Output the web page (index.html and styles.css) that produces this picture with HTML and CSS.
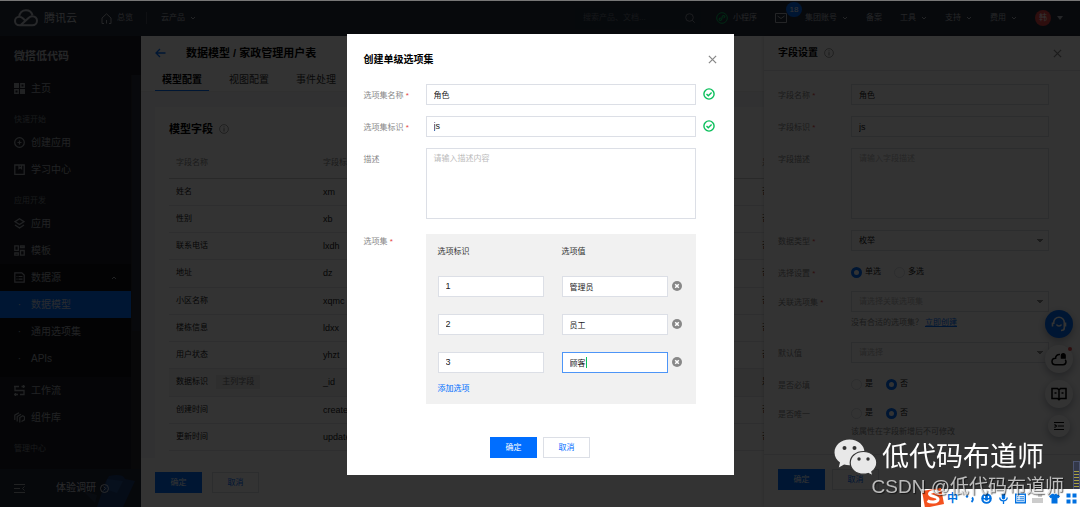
FILE: index.html
```html
<!DOCTYPE html>
<html lang="zh-CN">
<head>
<meta charset="utf-8">
<title>微搭低代码</title>
<meta name="viewport" content="width=device-width, initial-scale=1">
<link rel="stylesheet" href="styles.css">
</head>
<body>
<svg class="defs" aria-hidden="true">
  <symbol id="i-chevron" viewBox="0 0 6 4"><path d="M1 1l2 2 2-2" fill="none" stroke="currentColor"/></symbol>
  <symbol id="i-info" viewBox="0 0 10 10"><circle cx="5" cy="5" r="4.4" fill="none" stroke="currentColor" stroke-width=".8"/><path d="M5 4.2v3.3M5 2.4v1" stroke="currentColor"/></symbol>
  <symbol id="i-close" viewBox="0 0 10 10"><path d="M1 1l8 8M9 1l-8 8" stroke="currentColor" stroke-width="1.4"/></symbol>
  <symbol id="i-ok" viewBox="0 0 12 12"><circle cx="6" cy="6" r="5.1" fill="none" stroke="currentColor" stroke-width="1.4"/><path d="M3.5 6l1.8 1.8 3.3-3.2" fill="none" stroke="currentColor" stroke-width="1.4"/></symbol>
  <symbol id="i-del" viewBox="0 0 10 10"><circle cx="5" cy="5" r="5" fill="#888"/><path d="M3.2 3.2l3.6 3.6M6.8 3.2L3.2 6.8" stroke="#fff" stroke-width="1.5"/></symbol>
</svg>

<div class="app">
  <header class="topbar">
    <a class="brand" href="#">
      <svg width="24" height="18" viewBox="0 0 24 18" fill="none" stroke="currentColor" stroke-width="2"><path d="M6.500 16.200H5.500C2.800 16.200 1 14.300 1 12s1.900-4.200 4.300-4.200c1.500 0 2.500.5 3.500 1.400l3 2.800M5.200 7.800C5.500 4 8.300 1.200 12 1.200c3.200 0 5.700 2 6.500 5M5.500 16.200h12.800c2.700 0 4.700-1.900 4.700-4.500s-2-4.500-4.600-4.500c-1.600 0-2.700.6-3.900 1.700L6.500 16.200"/></svg>
      <span>腾讯云</span>
    </a>
    <a class="top-link home" href="#">
      <svg width="11" height="11" viewBox="0 0 11 11" fill="none" stroke="currentColor"><path d="M3 10.500H1V5L5.500.8 10 5v5.500H8M5.500 10.500V7"/></svg>
      总览</a>
    <a class="top-link products" href="#">云产品 <svg width="6" height="4"><use href="#i-chevron"/></svg></a>
    <form class="search">
      <input type="search" aria-label="搜索" placeholder="搜索产品、文档...">
      <svg width="10" height="10" viewBox="0 0 10 10" fill="none" stroke="currentColor"><circle cx="4.500" cy="4.500" r="3.800"/><path d="M7.200 7.200L9.700 9.700"/></svg>
    </form>
    <nav class="top-nav">
      <a class="top-link" href="#"><svg width="12" height="12" viewBox="0 0 12 12" fill="none" stroke="#07c160"><circle cx="6" cy="6" r="5.300"/><path d="M4.800 6.200C3.500 6.200 3 7 3.300 7.800c.5 1 2.200.7 2.400-.6L6.200 5c.2-1.400 1.900-1.900 2.500-.9.400.8-.2 1.700-1.300 1.700" stroke-width="1.200"/></svg>小程序</a>
      <a class="top-link mail" href="#" aria-label="消息"><svg width="12" height="10" viewBox="0 0 12 10" fill="none" stroke="currentColor"><path d="M.5.5h11v9H.5zM2.500 3L6 5.500 9.500 3"/></svg><span class="badge">18</span></a>
      <a class="top-link" href="#">集团账号<svg width="6" height="4"><use href="#i-chevron"/></svg></a>
      <a class="top-link" href="#">备案</a>
      <a class="top-link" href="#">工具<svg width="6" height="4"><use href="#i-chevron"/></svg></a>
      <a class="top-link" href="#">支持<svg width="6" height="4"><use href="#i-chevron"/></svg></a>
      <a class="top-link" href="#">费用<svg width="6" height="4"><use href="#i-chevron"/></svg></a>
      <button class="account" type="button"><span class="avatar">韩</span><svg width="6" height="4" viewBox="0 0 6 4"><path d="M0 0h6L3 4z" fill="currentColor"/></svg></button>
    </nav>
  </header>

  <div class="body">
    <aside class="sidebar">
      <h2 class="side-title">微搭低代码</h2>
      <div class="menu-wrap">
      <nav class="menu">
        <a class="item" href="#"><svg viewBox="0 0 11 11"><path d="M0 0h5v5H0zM6 6h5v5H6z" fill="currentColor"/><path d="M6.800.8h3.400v3.400H6.800zM.8 6.800h3.400v3.400H.8z" fill="none" stroke="currentColor" stroke-width="1.400"/></svg>主页</a>
        <p class="group-label">快速开始</p>
        <a class="item" href="#"><svg viewBox="0 0 11 11" fill="none" stroke="currentColor" stroke-width="1.200"><circle cx="5.500" cy="5.500" r="4.800"/><path d="M5.500 3.500v4M3.500 5.500h4"/></svg>创建应用</a>
        <a class="item" href="#"><svg viewBox="0 0 11 11" fill="none" stroke="currentColor" stroke-width="1.300"><path d="M.8 1h9.400v9.300H.8zM5 1v3.500l1.300-1 1.200 1V1"/></svg>学习中心</a>
        <p class="group-label">应用开发</p>
        <a class="item" href="#"><svg viewBox="0 0 11 11" fill="none" stroke="currentColor" stroke-width="1.300"><path d="M5.500.8L10 3.700 5.500 6.600 1 3.700zM1 7l4.500 3L10 7"/></svg>应用</a>
        <a class="item" href="#"><svg viewBox="0 0 11 11" fill="none" stroke="currentColor" stroke-width="1.300"><path d="M.8.800h3.500v4.500H.8zM6.500.800h3.700v1.700H6.500zM6.500 5.500h3.700v4.700H6.500zM.8 8h3.500v2.200H.8z"/></svg>模板</a>
        <div class="open-group">
          <a class="item" href="#"><svg viewBox="0 0 11 11" fill="none" stroke="currentColor" stroke-width="1.200"><path d="M.8.800h7L10.200 3v7.200H.8zM2.500 4.500h1M4.500 4.500h4M2.500 7.200h1M4.500 7.200h4"/></svg>数据源<svg class="up" viewBox="0 0 6 4"><path d="M1 3l2-2 2 2" fill="none" stroke="currentColor"/></svg></a>
          <a class="item sub active" href="#"><i>·</i>数据模型</a>
          <a class="item sub" href="#"><i>·</i>通用选项集</a>
          <a class="item sub" href="#"><i>·</i>APIs</a>
        </div>
        <a class="item" href="#"><svg viewBox="0 0 11 11" fill="none" stroke="currentColor" stroke-width="1.300"><path d="M0 1.500h5M7.500 1.500H11M1 1.500v4h9v4H6M0 9.500h4M9.500 0v3M1.500 8v3"/></svg>工作流</a>
        <a class="item" href="#"><svg viewBox="0 0 11 11" fill="none" stroke="currentColor" stroke-width="1.200"><path d="M.8 8V3.200L5 .8M3.200 9.500V4.500L7 2.200M5.800 10.500V5.500l3-1.700 1.700 1v3L7.500 9.500"/></svg>组件库</a>
        <p class="group-label">管理中心</p>
      </nav>
      <div class="track"><div class="thumb"></div></div>
      </div>
      <div class="side-foot">
        <svg width="11" height="9" viewBox="0 0 11 9" fill="none" stroke="currentColor"><path d="M0 .5h11M0 4.500h6M0 8.500h11M10.500 2.500l-2 2 2 2"/></svg>
        <a class="survey" href="#">体验调研 <svg width="9" height="9" viewBox="0 0 9 9" fill="none" stroke="currentColor"><circle cx="4.500" cy="4.500" r="4"/><path d="M3.800 2.700l1.800 1.800-1.800 1.800"/></svg></a>
        <svg class="art" width="54" height="34" viewBox="0 0 54 34"><path d="M0 18l14 4-2 8z" fill="#2c3850"/><path d="M26 3q14-3 16 3l10 2-12 26H14L22 10z" fill="#1c3c74"/><path d="M24 6l16 2-6 12-12-4z" fill="#24508f"/></svg>
      </div>
    </aside>

    <main class="main">
      <div class="page-head">
        <div class="crumb">
          <a href="#" aria-label="返回"><svg width="11" height="10" viewBox="0 0 11 10" fill="none" stroke="currentColor" stroke-width="1.300"><path d="M10.500 5H1M5 1L1 5l4 4"/></svg></a>
          <h1>数据模型 / 家政管理用户表</h1>
        </div>
        <nav class="tabs">
          <a class="on" href="#">模型配置</a><a href="#">视图配置</a><a href="#">事件处理</a>
        </nav>
      </div>
      <div class="scroll">
        <section class="card">
          <h2>模型字段 <svg width="10" height="10"><use href="#i-info"/></svg></h2>
          <table>
            <thead><tr><th>字段名称</th><th>字段标识</th><th></th><th>是</th></tr></thead>
            <tbody>
              <tr><td>姓名</td><td class="code">xm</td><td></td><td>否</td></tr>
              <tr><td>性别</td><td class="code">xb</td><td></td><td>否</td></tr>
              <tr><td>联系电话</td><td class="code">lxdh</td><td></td><td>否</td></tr>
              <tr><td>地址</td><td class="code">dz</td><td></td><td>否</td></tr>
              <tr><td>小区名称</td><td class="code">xqmc</td><td></td><td>否</td></tr>
              <tr><td>楼栋信息</td><td class="code">ldxx</td><td></td><td>否</td></tr>
              <tr><td>用户状态</td><td class="code">yhzt</td><td></td><td>否</td></tr>
              <tr class="key"><td>数据标识 <span class="tag">主列字段</span></td><td class="code">_id</td><td></td><td>是</td></tr>
              <tr><td>创建时间</td><td class="code">createdAt</td><td></td><td>否</td></tr>
              <tr><td>更新时间</td><td class="code">updatedAt</td><td></td><td>否</td></tr>
            </tbody>
          </table>
        </section>
      </div>
      <div class="page-foot"><button class="btn primary" type="button">确定</button><button class="btn" type="button">取消</button></div>

      <section class="drawer">
        <div class="drawer-head"><h2>字段设置</h2><svg width="10" height="10"><use href="#i-info"/></svg><button class="icon-btn" type="button" aria-label="关闭"><svg width="9" height="9"><use href="#i-close"/></svg></button></div>
        <form class="form">
          <label class="lbl req" for="f-name">字段名称</label><input class="field" id="f-name" value="角色">
          <label class="lbl req" for="f-id">字段标识</label><input class="field latin" id="f-id" value="js">
          <label class="lbl" for="f-desc">字段描述</label><textarea class="field" id="f-desc" placeholder="请输入字段描述"></textarea>
          <label class="lbl req" for="f-type">数据类型</label><select class="field" id="f-type"><option>枚举</option></select>
          <span class="lbl req">选择设置</span>
          <div class="radios"><label><input type="radio" name="mode" checked>单选</label><label><input type="radio" name="mode">多选</label></div>
          <label class="lbl req" for="f-set">关联选项集</label>
          <div><select class="field empty" id="f-set"><option>请选择关联选项集</option></select><p class="hint">没有合适的选项集？<a href="#">立即创建</a></p></div>
          <label class="lbl" for="f-def">默认值</label><select class="field empty" id="f-def"><option>请选择</option></select>
          <span class="lbl">是否必填</span>
          <div class="radios"><label><input type="radio" name="must">是</label><label><input type="radio" name="must" checked>否</label></div>
          <span class="lbl">是否唯一</span>
          <div><div class="radios"><label><input type="radio" name="uniq">是</label><label><input type="radio" name="uniq" checked>否</label></div><p class="hint">该属性在字段新增后不可修改</p></div>
        </form>
        <div class="drawer-foot"><button class="btn primary" type="button">确定</button><button class="btn" type="button">取消</button></div>
      </section>
    </main>
  </div>
</div>

<div class="fabs">
  <button class="fab blue" type="button" aria-label="客服"><svg width="16" height="16" viewBox="0 0 16 16" fill="none" stroke="#fff" stroke-width="1.600"><path d="M2.700 8V6.500a5.300 5.300 0 0 1 10.600 0V12c0 1.500-1 2.500-3.300 2.500M1.500 6.500v4M14.500 6.500v4M5.500 8.500c1 2 4 2 5 0"/></svg></button>
  <button class="fab" type="button" aria-label="云通知"><svg width="16" height="14" viewBox="0 0 16 14" fill="none" stroke="#000" stroke-width="1.500"><path d="M9 2.500C6.500 2 4.500 4 4.600 6.300 2.500 6.300 1 7.600 1 9.500S2.400 12.700 4.300 12.700h7.800c1.700 0 2.900-1.200 2.900-2.900 0-.8-.3-1.500-.8-2"/><path d="M10.500 6V3.500a1.800 1.800 0 0 1 3.600 0V6z" fill="#000"/></svg><span class="dot"></span></button>
  <button class="fab" type="button" aria-label="文档"><svg width="16" height="14" viewBox="0 0 16 14" fill="none" stroke="#000" stroke-width="1.500"><path d="M1 1.500h5.500L8 3l1.500-1.500H15v10H9.500L8 12.700l-1.500-1.200H1zM8 3v9M3.500 6h2M10.500 6h2"/></svg></button>
  <button class="fab small" type="button" aria-label="目录"><svg width="10" height="10" viewBox="0 0 10 10" fill="none" stroke="#000" stroke-width="1.200"><path d="M0 1.500h10M4 5h6M0 8.500h10M.5 3.500L2.500 5l-2 1.500"/></svg></button>
</div>

<div class="mask">
  <form class="modal" role="dialog" aria-labelledby="dlg-title">
    <div class="modal-head"><h2 id="dlg-title">创建单级选项集</h2><button class="icon-btn" type="button" aria-label="关闭"><svg width="9" height="9"><use href="#i-close"/></svg></button></div>
    <div class="form">
      <label class="lbl req" for="s-name">选项集名称</label><div class="checked"><input class="field" id="s-name" value="角色"><svg width="12" height="12"><use href="#i-ok"/></svg></div>
      <label class="lbl req" for="s-id">选项集标识</label><div class="checked"><input class="field latin" id="s-id" value="js"><svg width="12" height="12"><use href="#i-ok"/></svg></div>
      <label class="lbl" for="s-desc">描述</label><textarea class="field" id="s-desc" placeholder="请输入描述内容"></textarea>
      <span class="lbl req">选项集</span>
      <div class="options">
        <span class="col-name">选项标识</span><span class="col-name">选项值</span><span></span>
        <input class="field latin" aria-label="选项标识 1" value="1"><input class="field" aria-label="选项值 1" value="管理员"><button class="icon-btn" type="button" aria-label="删除"><svg width="10" height="10"><use href="#i-del"/></svg></button>
        <input class="field latin" aria-label="选项标识 2" value="2"><input class="field" aria-label="选项值 2" value="员工"><button class="icon-btn" type="button" aria-label="删除"><svg width="10" height="10"><use href="#i-del"/></svg></button>
        <input class="field latin" aria-label="选项标识 3" value="3"><div class="editing"><input class="field" aria-label="选项值 3" value="顾客"><span class="caret"></span></div><button class="icon-btn" type="button" aria-label="删除"><svg width="10" height="10"><use href="#i-del"/></svg></button>
        <a class="add" href="#">添加选项</a>
      </div>
    </div>
    <div class="modal-foot"><button class="btn primary" type="button">确定</button><button class="btn" type="button">取消</button></div>
  </form>
</div>

<div class="ime">
  <svg class="sogou" width="24" height="20" viewBox="0 0 24 20"><path d="M1 3L20 0l3 16L4 20z" fill="#f4511e"/><path d="M18 4.500c-3-1.800-9-1.500-9.500 1.300-.5 3 9 2.200 8.500 5.700-.4 3-7.500 3.300-10.500 1.300" fill="none" stroke="#fff" stroke-width="3"/></svg>
  <span>中</span>
  <svg viewBox="0 0 11 11"><circle cx="3" cy="3.500" r="1.200" fill="currentColor"/><path d="M8 4.500q2 2-.5 4.500" fill="none" stroke="currentColor" stroke-width="1.800"/></svg>
  <svg viewBox="0 0 11 11"><circle cx="5.500" cy="5.500" r="5.300" fill="currentColor"/><path d="M3.500 3v2M7.500 3v2M2.800 6.500c1 2.500 4.400 2.500 5.400 0" fill="none" stroke="#fff" stroke-width="1.300"/></svg>
  <svg viewBox="0 0 11 11"><rect x="3.800" y="0" width="3.400" height="6.500" rx="1.700" fill="currentColor"/><path d="M1.800 4.500c0 4.500 7.400 4.500 7.400 0M5.500 8v3" fill="none" stroke="currentColor" stroke-width="1.300"/></svg>
  <svg viewBox="0 0 11 11"><rect x=".7" y="1.200" width="9.600" height="8.600" fill="none" stroke="currentColor" stroke-width="1.400"/><path d="M2 3.800h1.500M4.500 3.800H9M2 5.800h1.500M4.500 5.800H9M2 7.800h7" stroke="currentColor"/></svg>
  <svg class="off" viewBox="0 0 11 11"><path d="M0 5h11v5H0zM6 1h4v3H6z" fill="currentColor"/></svg>
  <svg viewBox="0 0 11 11"><path d="M3 .8h1.500q1 1.200 2 0H8l3 2.500-1.500 2-1-.6V10.500h-6V4.700l-1 .6L0 3.300z" fill="currentColor"/></svg>
  <svg viewBox="0 0 11 11"><path d="M.5.500h4v4h-4zM6.500.500h4v4h-4zM.5 6.500h4v4h-4zM6.500 6.500h4v4h-4z" fill="currentColor"/></svg>
</div>
<div class="meter"></div>
<div class="mark">
  <svg width="44" height="37" viewBox="0 0 44 37"><path d="M15.500.5C7 .5.500 6.300.500 13.500c0 4.200 2.200 7.600 5.500 10l-1.200 5 5.300-3c1.800.5 3.500.8 5.400.8 8.400 0 15-5.700 15-12.900S23.900.5 15.500.5z" fill="#e8e8e8"/><path d="M29.500 12.500c-7.600 0-13.300 4.900-13.300 11.300s5.700 11.400 13.300 11.400c1.600 0 3.100-.2 4.600-.7l4.800 2.300-1.100-4.100c3-2.100 5-5.200 5-8.900 0-6.400-5.800-11.300-13.300-11.300z" fill="#e8e8e8" stroke="#333" stroke-width="1.200"/><g fill="#333"><circle cx="10.500" cy="9" r="2"/><circle cx="20.500" cy="9" r="2"/><circle cx="25" cy="20" r="1.700"/><circle cx="34" cy="20" r="1.700"/></g></svg>
  <span>低代码布道师</span>
</div>
<div class="credit">CSDN @低代码布道师</div>
</body>
</html>
```
FILE: styles.css
```css
* { box-sizing: border-box; }
body {
  margin: 0;
  color: #000;
  font: 8px/12px "Liberation Sans", "Noto Sans CJK SC", sans-serif;
  overflow: hidden;
}
h1, h2, p { margin: 0; }
a { color: inherit; text-decoration: none; }
button, input, select, textarea { font: inherit; color: inherit; margin: 0; }
svg { display: block; flex: none; }
.defs { position: absolute; width: 0; height: 0; }

.app { display: flex; flex-direction: column; height: 100vh; background: #fff; isolation: isolate; }

/* top bar */
.topbar {
  display: flex; align-items: center; flex: none; height: 36px;
  padding: 0 17px 0 14px; background: #262f3e; color: #b4b8c0;
}
.brand { display: flex; align-items: center; gap: 6px; font-size: 11px; color: #c4c8d0; }
.top-link { display: flex; align-items: center; gap: 5px; }
.home { margin-left: 24px; padding-right: 13px; border-right: 1px solid #4a5260; }
.products { margin-left: 14px; }
.search {
  display: flex; align-items: center; width: 126px; height: 21px; margin-left: auto;
  padding: 0 6px 0 8px; background: #202e3c; color: #8a909c;
}
.search input { flex: 1; min-width: 0; padding: 0; border: 0; background: none; outline: 0; }
.search input::placeholder { color: #6b7280; }
.top-nav { display: flex; align-items: center; margin-left: 15px; gap: 18px; }
.mail { position: relative; }
.badge {
  position: absolute; left: 11px; top: -11px; width: 16px; height: 15px; border-radius: 8px;
  background: #006eff; color: #fff; line-height: 15px; text-align: center;
}
.account { display: flex; align-items: center; gap: 6px; padding: 0; border: 0; background: none; }
.avatar { width: 16px; height: 16px; border-radius: 50%; background: #e54545; color: #fff; line-height: 16px; text-align: center; }

/* side bar */
.body { display: flex; flex: 1; min-height: 0; }
.sidebar { display: flex; flex-direction: column; flex: none; width: 141px; background: #1a1d24; color: #a4a8b0; }
.side-title { padding: 13px 14px 12px; font-size: 11px; line-height: 14px; color: #b8bcc4; }
.menu-wrap { display: flex; flex: 1; min-height: 0; }
.menu { flex: 1; min-width: 0; overflow: hidden; font-size: 10px; }
.track { width: 10px; background: #2a2c31; }
.thumb { height: 65%; margin: 0 1px; background: #2b303c; }
.item { display: flex; align-items: center; gap: 6px; height: 27px; padding: 0 14px; }
.item svg { width: 11px; height: 11px; }
.item .up { width: 6px; height: 4px; margin-left: auto; }
.group-label { height: 19px; margin-top: 8px; padding: 0 14px; font-size: 8px; line-height: 19px; color: #7c8088; }
.open-group { padding-bottom: 5px; background: #101218; }
.sub i { width: 11px; text-align: center; font-style: normal; }
.active { background: #006eff; color: #c8d8f0; }
.side-foot {
  position: relative; display: flex; align-items: center; flex: none; height: 38px;
  padding: 0 14px; background: #202838;
}
.side-foot > svg, .survey { z-index: 1; }
.survey { display: flex; align-items: center; gap: 4px; margin-left: 31px; font-size: 10px; color: #d0d4dc; }
.side-foot .art { position: absolute; right: 4px; bottom: 0; z-index: 0; }

/* page */
.main { position: relative; display: flex; flex-direction: column; flex: 1; min-width: 0; }
.page-head { flex: none; padding: 0 14px; border-bottom: 1px solid #eee; }
.crumb { display: flex; align-items: center; gap: 20px; height: 33px; color: #006eff; }
.crumb h1 { font-size: 11px; line-height: 16px; color: #000; }
.tabs { display: flex; gap: 13px; }
.tabs a { height: 22px; padding: 0 7px; font-size: 10px; line-height: 22px; color: #333; }
.tabs .on { font-weight: bold; color: #000; border-bottom: 1px solid #006eff; }
.scroll { flex: 1; min-height: 0; overflow: hidden; padding: 15px 14px 0; background: #f3f4f7; }
.card { height: 100%; padding: 14px; background: #fff; }
.card h2 { display: flex; align-items: center; gap: 6px; font-size: 11px; line-height: 16px; }
.card h2 svg, .drawer-head > svg { color: #888; }
.card table { width: 100%; height: 303px; margin-top: 11px; border-collapse: collapse; table-layout: fixed; }
.card th, .card td { height: 27px; padding: 0 7px; border-bottom: 1px solid #e5e7ea; text-align: left; white-space: nowrap; color: #222; }
.card th { height: 30px; border-color: #ccc; font-weight: normal; color: #888; }
.card th:nth-child(1), .card th:nth-child(2) { width: 147px; }
.card th:nth-child(3) { width: 292px; }
.card .code, .latin { font-size: 9px; }
.key { background: #f6f6f6; }
.tag { display: inline-block; margin-left: 6px; padding: 1px 6px; background: #e3e3e3; color: #777; }
.page-foot { display: flex; gap: 10px; flex: none; height: 49px; padding: 14px; }

.btn { min-width: 47px; height: 21px; padding: 0 14px; border: 1px solid #dcdfe6; background: #fff; color: #006eff; line-height: 19px; }
.btn.primary { border-color: #006eff; background: #006eff; color: #fff; }
.icon-btn { display: flex; padding: 0; border: 0; background: none; color: #888; }

/* forms */
.form { display: grid; grid-template-columns: auto 1fr; row-gap: 11px; align-items: start; }
.lbl { height: 18px; padding-top: 4px; line-height: 16px; color: #888; }
.req::after { content: " *"; color: #e54545; }
.field {
  display: block; width: 100%; height: 21px; padding: 0 7px; border: 1px solid #dcdfe6; border-radius: 0;
  background: #fff; color: #222; outline: 0; appearance: none;
}
.field::placeholder, .field.empty { color: #bbb; }
textarea.field { height: 71px; padding: 4px 7px; resize: none; }
select.field {
  background: conic-gradient(from -37deg at 50% 100%, #888 74deg, transparent 0) right 5px center / 6px 4px no-repeat, #fff;
}
.radios { display: flex; gap: 13px; height: 18px; padding-top: 2px; color: #222; }
.radios label { display: flex; align-items: center; gap: 3px; }
.radios input { width: 11px; height: 11px; border: 1px solid #dcdfe6; border-radius: 50%; appearance: none; }
.radios input:checked { border: 3px solid #006eff; }
.hint { margin-top: 3px; line-height: 16px; color: #888; }
.hint a { margin-left: 2px; color: #006eff; text-decoration: underline; }

.drawer {
  position: absolute; inset: 0 0 0 auto; display: flex; flex-direction: column; width: 316px;
  background: #fff; box-shadow: 0 0 4px rgba(0, 0, 0, .2);
}
.drawer-head { display: flex; align-items: center; gap: 6px; flex: none; height: 35px; padding: 0 18px 0 14px; border-bottom: 1px solid #e5e7ea; }
.drawer-head h2 { font-size: 10px; }
.drawer-head .icon-btn { margin-left: auto; }
.drawer .form { flex: 1; grid-template-columns: 73px 1fr; align-content: start; padding: 13px 31px 0 14px; }
.drawer-foot { display: flex; gap: 7px; flex: none; height: 53px; padding: 14px; border-top: 1px solid #e5e7ea; }

/* floating buttons */
.fabs { position: fixed; right: 7px; bottom: 70px; display: flex; flex-direction: column; align-items: center; gap: 7px; }
.fab {
  position: relative; display: flex; align-items: center; justify-content: center; width: 28px; height: 28px;
  padding: 0; border: 0; border-radius: 50%; background: #fff; box-shadow: 0 3px 8px rgba(40, 50, 70, .4);
}
.fab.blue { background: #006eff; }
.fab.small { width: 22px; height: 22px; }
.dot { position: absolute; right: 1px; top: 2px; width: 4px; height: 4px; border-radius: 50%; background: #e54545; }

/* dialog */
.mask { position: fixed; inset: 0; display: flex; align-items: center; justify-content: center; background: rgba(0, 0, 0, .8); border-top: 1px solid #777; }
.modal { width: 387px; padding: 17px; background: #fff; }
.modal-head { display: flex; align-items: center; justify-content: space-between; height: 18px; }
.modal-head h2 { font-size: 10px; line-height: 14px; }
.modal .form { grid-template-columns: 62px 270px; margin-top: 15px; }
.checked { position: relative; }
.checked svg { position: absolute; left: calc(100% + 7px); top: 4px; color: #0abf5b; }
.options {
  display: grid; grid-template-columns: 106px 106px auto; column-gap: 18px; row-gap: 17px; align-items: center;
  margin-top: 4px; padding: 11px 13px 8px 12px; background: #f1f1f1;
}
.options .icon-btn { margin-left: -14px; }
.col-name { height: 14px; line-height: 14px; color: #333; }
.editing { position: relative; }
.editing .field { border-color: #4d95f7; }
.caret { position: absolute; left: 24px; top: 5px; width: 1px; height: 11px; background: #0abf5b; }
.add { margin-top: -8px; line-height: 14px; color: #006eff; }
.modal-foot { display: flex; justify-content: center; gap: 6px; margin-top: 33px; }

/* desktop input bar and marks */
.ime {
  position: fixed; right: 0; bottom: 0; display: flex; align-items: center; gap: 6px; height: 18px;
  padding: 0 3px 0 0; background: #fff; color: #0070e0; font-size: 11px; font-weight: bold;
}
.ime svg { width: 11px; height: 11px; }
.ime .sogou { width: 24px; height: 20px; margin-right: -4px; }
.ime .off { color: #ccc; }
.meter {
  position: fixed; right: 0; bottom: 18px; width: 7px; height: 28px; border: 1px solid #4b5370; border-bottom: 0;
  background: linear-gradient(#33384a 8px, transparent 0), repeating-linear-gradient(#a8a040 0 1px, #33384a 1px 3px);
}
.mark { position: fixed; right: 36px; bottom: 31px; display: flex; align-items: center; gap: 4px; color: #fff; font-size: 27px; line-height: 37px; }
.credit {
  position: fixed; right: 16px; bottom: 8px; color: rgba(225, 225, 225, .8); font-size: 19px; line-height: 24px;
  text-shadow: 1px 1px 1px rgba(0, 0, 0, .6);
}
```
